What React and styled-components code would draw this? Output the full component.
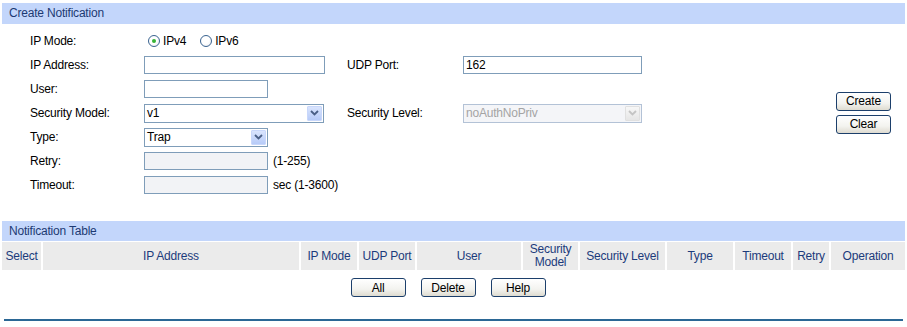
import React from 'react';
import styled, { createGlobalStyle } from 'styled-components';

const GlobalStyle = createGlobalStyle`
    body {
        margin: 0;
        background: #fff;
        font-family: "Liberation Sans", Arial, sans-serif;
        font-size: 12px;
        letter-spacing: -0.2px;
        color: #000;
    }
`;

const Page = styled.div`
    width: 903px;
    padding: 3px 2px 0 2px;
`;

const SectionBar = styled.div`
    height: 21px;
    line-height: 21px;
    padding-left: 7px;
    background: #c3d6fb;
    color: #1d3a73;
    font-size: 12px;
`;

const FormArea = styled.div`
    display: flex;
    align-items: center;
    padding: 5px 14px 0 28px;
`;

const FormGrid = styled.div`
    display: grid;
    grid-template-columns: 114px 203px 116px 179px;
    grid-auto-rows: 24px;
    align-items: center;
`;

const Label = styled.div`
    white-space: nowrap;
`;

const Field = styled.div`
    display: flex;
    align-items: center;
    gap: 5px;
    grid-column: ${(p) => p.$span || 'auto'};
`;

const TextInput = styled.div`
    box-sizing: border-box;
    width: ${(p) => p.$w}px;
    height: 18px;
    line-height: 16px;
    padding-left: 2px;
    border: 1px solid #7f9db9;
    background: ${(p) => (p.$disabled ? '#f2f3f6' : '#fff')};
`;

const SelectBox = styled.div`
    box-sizing: border-box;
    display: flex;
    align-items: center;
    justify-content: space-between;
    width: ${(p) => p.$w}px;
    height: 19px;
    padding: 0 1px 0 2px;
    border: 1px solid ${(p) => (p.$disabled ? '#b3c2d6' : '#7f9db9')};
    background: ${(p) => (p.$disabled ? '#f4f5f8' : '#fff')};
    color: ${(p) => (p.$disabled ? '#a4a4a4' : '#000')};
`;

const SelectArrow = styled.div`
    width: 15px;
    height: 15px;
    display: flex;
    align-items: center;
    justify-content: center;
    border-radius: 1px;
    background: ${(p) =>
        p.$disabled
            ? 'linear-gradient(#f7f7f7, #e6e6e6)'
            : 'linear-gradient(#d9e4fd, #b7cbf8)'};
    border: 1px solid ${(p) => (p.$disabled ? '#e0e0e0' : '#c8d7fb')};
    box-sizing: border-box;
`;

const Hint = styled.span`
    white-space: nowrap;
`;

const RadioGroup = styled.div`
    display: flex;
    align-items: center;
    padding-left: 4px;
`;

const RadioOption = styled.label`
    display: flex;
    align-items: center;
    gap: 3px;
    margin-right: 14px;
`;

const RadioDot = styled.span`
    box-sizing: border-box;
    width: 12px;
    height: 12px;
    border-radius: 50%;
    border: 1px solid #3a6390;
    background: radial-gradient(circle at 40% 40%, #fff 45%, #e4e8ee 100%);
    display: flex;
    align-items: center;
    justify-content: center;

    &::after {
        content: '';
        width: 4px;
        height: 4px;
        border-radius: 50%;
        background: ${(p) => (p.$checked ? '#36b336' : 'transparent')};
    }
`;

const SideButtons = styled.div`
    margin-left: auto;
    display: flex;
    flex-direction: column;
    gap: 4px;
    margin-top: -1px;
`;

const Button = styled.button`
    box-sizing: border-box;
    width: ${(p) => p.$w || 55}px;
    height: 19px;
    padding: 0;
    border: 1px solid #1c3f6b;
    border-radius: 3px;
    background: linear-gradient(#ffffff, #f3f3ef 60%, #dedbd0);
    font-family: "Liberation Sans", Arial, sans-serif;
    font-size: 12px;
    letter-spacing: -0.2px;
    color: #000;
`;

const TableBar = styled(SectionBar)`
    margin-top: 24px;
    height: 20px;
    line-height: 20px;
`;

const HeadRow = styled.div`
    display: grid;
    grid-template-columns: 39px 256px 56px 56px 104px 55px 85px 66px 56px 36px 74px;
    column-gap: 2px;
    margin-top: 1px;
`;

const HeadCell = styled.div`
    height: 28px;
    display: flex;
    align-items: center;
    justify-content: center;
    text-align: center;
    line-height: 13px;
    background: #ebebeb;
    color: #1c3b7c;
`;

const ButtonRow = styled.div`
    display: flex;
    justify-content: center;
    gap: 15px;
    padding-right: 11px;
    margin-top: 8px;
`;

const Rule = styled.div`
    height: 2px;
    margin: 22px 2px 0 2px;
    background: #2b6795;
`;

const Chevron = ({ disabled }) => (
    <svg width="9" height="6" viewBox="0 0 9 6">
        <path
          d="M1 1 L4.5 4.5 L8 1"
          fill="none"
          stroke={disabled ? '#c4c4c4' : '#4a5f86'}
          strokeWidth="1.8"
        />
    </svg>
);

const Select = ({ w, value, disabled }) => (
    <SelectBox $w={w} $disabled={disabled}>
        <span>{value}</span>
        <SelectArrow $disabled={disabled}>
            <Chevron disabled={disabled} />
        </SelectArrow>
    </SelectBox>
);

const columns = [
    'Select',
    'IP Address',
    'IP Mode',
    'UDP Port',
    'User',
    <>Security<br />Model</>,
    'Security Level',
    'Type',
    'Timeout',
    'Retry',
    'Operation',
];

const App = () => (
    <Page>
        <GlobalStyle />
        <SectionBar>Create Notification</SectionBar>
        <FormArea>
            <FormGrid>
                <Label>IP Mode:</Label>
                <Field $span="span 3">
                    <RadioGroup>
                        <RadioOption><RadioDot $checked />IPv4</RadioOption>
                        <RadioOption><RadioDot />IPv6</RadioOption>
                    </RadioGroup>
                </Field>

                <Label>IP Address:</Label>
                <Field><TextInput $w={181} /></Field>
                <Label>UDP Port:</Label>
                <Field><TextInput $w={179}>162</TextInput></Field>

                <Label>User:</Label>
                <Field $span="span 3"><TextInput $w={124} /></Field>

                <Label>Security Model:</Label>
                <Field><Select w={180} value="v1" /></Field>
                <Label>Security Level:</Label>
                <Field><Select w={179} value="noAuthNoPriv" disabled /></Field>

                <Label>Type:</Label>
                <Field $span="span 3"><Select w={124} value="Trap" /></Field>

                <Label>Retry:</Label>
                <Field $span="span 3">
                    <TextInput $w={124} $disabled />
                    <Hint>(1-255)</Hint>
                </Field>

                <Label>Timeout:</Label>
                <Field $span="span 3">
                    <TextInput $w={124} $disabled />
                    <Hint>sec (1-3600)</Hint>
                </Field>
            </FormGrid>
            <SideButtons>
                <Button>Create</Button>
                <Button>Clear</Button>
            </SideButtons>
        </FormArea>

        <TableBar>Notification Table</TableBar>
        <HeadRow>
            {columns.map((c, i) => (
                <HeadCell key={i}>{c}</HeadCell>
            ))}
        </HeadRow>
        <ButtonRow>
            <Button>All</Button>
            <Button>Delete</Button>
            <Button>Help</Button>
        </ButtonRow>
        <Rule />
    </Page>
);

export default App;
